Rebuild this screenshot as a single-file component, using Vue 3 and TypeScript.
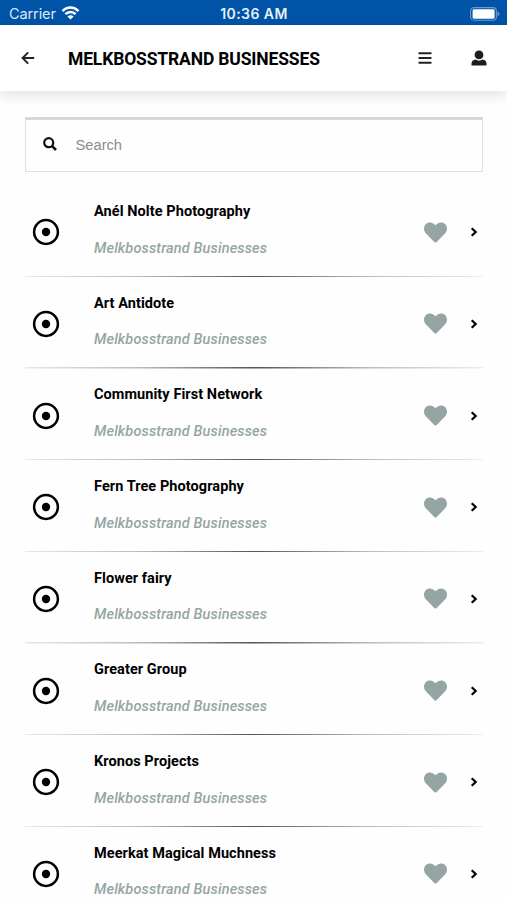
<script setup lang="ts">
import { ref, computed } from 'vue'

interface Business {
  name: string
  category: string
}

const category = 'Melkbosstrand Businesses'
const query = ref('')
const businesses: Business[] = [
  'Anél Nolte Photography',
  'Art Antidote',
  'Community First Network',
  'Fern Tree Photography',
  'Flower fairy',
  'Greater Group',
  'Kronos Projects',
  'Meerkat Magical Muchness',
].map((name) => ({ name, category }))

const visible = computed(() =>
  businesses.filter((b) => b.name.toLowerCase().includes(query.value.toLowerCase())),
)
</script>

<template>
  <div class="screen">
    <div class="status">
      <div class="carrier">
        <span>Carrier</span>
        <svg class="wifi" viewBox="0 0 18 14">
          <g fill="none" stroke="#fff" stroke-width="2.5">
            <path d="M1 5.1C5.5.3 12.5.3 17 5.1" />
            <path d="M3.9 8.2c2.9-3 7.3-3 10.2 0" />
          </g>
          <path d="M9 13.6 5.9 10.4c1.8-1.6 4.4-1.6 6.2 0z" fill="#fff" />
        </svg>
      </div>
      <span class="time">10:36 AM</span>
      <svg class="battery" viewBox="0 0 30 14">
        <rect x=".6" y=".6" width="25.8" height="12.6" rx="3.4" fill="none" stroke="#6a9bd1" stroke-width="1.1" />
        <rect x="2.6" y="2.3" width="22" height="9.4" rx="1.4" fill="#fff" />
        <path d="M27.5 4.6c2.5 1 2.5 3.8 0 4.8z" fill="#6a9bd1" />
      </svg>
    </div>

    <header class="bar">
      <svg class="back" viewBox="0 0 14 14">
        <path d="M7.2 1.4 1.6 7l5.6 5.6M2 7h11.2" fill="none" stroke="#222" stroke-width="2" />
      </svg>
      <h1>MELKBOSSTRAND BUSINESSES</h1>
      <svg class="menu" viewBox="0 0 14 12">
        <path d="M1.3 1.2h11.4M1.3 6h11.4M1.3 10.8h11.4" stroke="#222" stroke-width="2" stroke-linecap="round" />
      </svg>
      <svg class="user" viewBox="0 0 16 16">
        <circle cx="8" cy="4.9" r="4.4" fill="#1c1c1c" />
        <path d="M.5 15.2v-1.5c0-2.5 1.7-4 4-4.2 2 1.5 5 1.5 7 0 2.3.2 4 1.7 4 4.2v1.5q0 .4-.5.4H1q-.5 0-.5-.4z" fill="#1c1c1c" />
      </svg>
    </header>

    <main>
      <label class="search">
        <svg viewBox="0 0 14 14">
          <circle cx="5.7" cy="5.7" r="4.5" fill="none" stroke="#111" stroke-width="2.2" />
          <path d="m9.2 9.2 3.8 3.8" stroke="#111" stroke-width="2.6" />
        </svg>
        <input v-model="query" type="text" placeholder="Search" />
      </label>

      <ul>
        <li v-for="b in visible" :key="b.name">
          <svg class="target" viewBox="0 0 28 28">
            <circle cx="14" cy="14" r="11.9" fill="none" stroke="#000" stroke-width="2.5" />
            <circle cx="14" cy="14" r="4.2" />
          </svg>
          <div class="text">
            <h2>{{ b.name }}</h2>
            <p>{{ b.category }}</p>
          </div>
          <svg class="heart" viewBox="0 0 512 512">
            <path fill="#95a5a3" d="M462.3 62.6C407.5 15.900 326 24.3 275.7 76.200L256 96.5l-19.7-20.3C186.1 24.3 104.5 15.9 49.7 62.6c-62.8 53.6-66.1 149.8-9.9 207.9l193.5 199.8c12.500 12.9 32.8 12.9 45.3 0l193.5-199.8c56.3-58.1 53-154.3-9.8-207.9z" />
          </svg>
          <svg class="chevron" viewBox="0 0 8 10">
            <path d="m1.700 1.2 4 3.8-4 3.8" fill="none" stroke="#000" stroke-width="2.2" />
          </svg>
        </li>
      </ul>
    </main>
  </div>
</template>

<style>
body {
  background: #fff;
  overflow: hidden;
}
</style>

<style scoped>
* {
  box-sizing: border-box;
}
.screen {
  height: 900px;
  overflow: hidden;
  background: #fefefe;
  font-family: Roboto, sans-serif;
}
.status {
  height: 25px;
  background: #0053a6;
  display: grid;
  grid-template-columns: 1fr auto 1fr;
  align-items: center;
  padding: 3px 7px 0 9px;
  color: #fff;
  font: 14.5px/20px Inter, sans-serif;
}
.carrier {
  display: flex;
  align-items: center;
  gap: 5px;
  color: #d9e8f8;
}
.carrier span {
  letter-spacing: -0.1px;
}
.wifi {
  width: 19px;
  height: 14px;
  margin-top: -2px;
}
.time {
  font-weight: 600;
  font-size: 14px;
  letter-spacing: 0.45px;
  margin-right: 1px;
  color: #e6f0fa;
}
.battery {
  width: 30px;
  height: 14px;
  justify-self: end;
  margin-top: -1px;
}
.bar {
  height: 66px;
  display: flex;
  align-items: center;
  padding: 0 20px 0 21px;
  background: #fff;
  box-shadow: 0 5px 12px rgba(0, 0, 0, 0.1);
}
.back {
  width: 14px;
  height: 14px;
}
h1 {
  flex: 1;
  margin: 1px 0 0 33px;
  font-size: 17.5px;
  line-height: 24px;
  font-weight: 700;
  letter-spacing: -0.15px;
  white-space: nowrap;
  color: #000;
}
.menu {
  width: 14px;
  height: 12px;
}
.user {
  width: 16px;
  height: 16px;
  margin-left: 39px;
}
main {
  padding: 26px 24px 0 25px;
}
.search {
  height: 55px;
  display: flex;
  align-items: center;
  padding-left: 17px;
  border: 1.5px solid #e0e0e0;
  border-top: 3px solid #d6d6d6;
}
.search svg {
  width: 14px;
  height: 14px;
  margin-top: -4px;
}
input {
  flex: 1;
  margin: -2px 0 0 18.5px;
  padding: 0;
  border: 0;
  outline: 0;
  background: transparent;
  font: 14.7px/20px "Liberation Sans", sans-serif;
}
input::placeholder {
  color: #8c8c8c;
  opacity: 1;
}
ul {
  list-style: none;
  margin: 13.5px 0 0;
  padding: 0;
}
li {
  height: 91.67px;
  display: flex;
  align-items: center;
  padding: 2px 5px 0 7px;
  background: linear-gradient(90deg, #e8e8e8, #bbb 25%, #555 50%, #bbb 75%, #ededed) bottom / 100% 1.5px no-repeat;
}
.target {
  width: 28px;
  height: 28px;
}
.text {
  flex: 1;
  margin: -4px 0 0 34px;
}
h2,
p {
  margin: 0;
  font-size: 14.5px;
  line-height: 20px;
}
h2 {
  font-weight: 700;
  letter-spacing: 0.07px;
  color: #000;
}
p {
  margin-top: 16.5px;
  font-style: italic;
  font-weight: 500;
  letter-spacing: 0.15px;
  color: #95a5a3;
}
.heart {
  width: 23px;
  height: 23px;
}
.chevron {
  width: 8px;
  height: 10px;
  margin-left: 23px;
}
</style>
